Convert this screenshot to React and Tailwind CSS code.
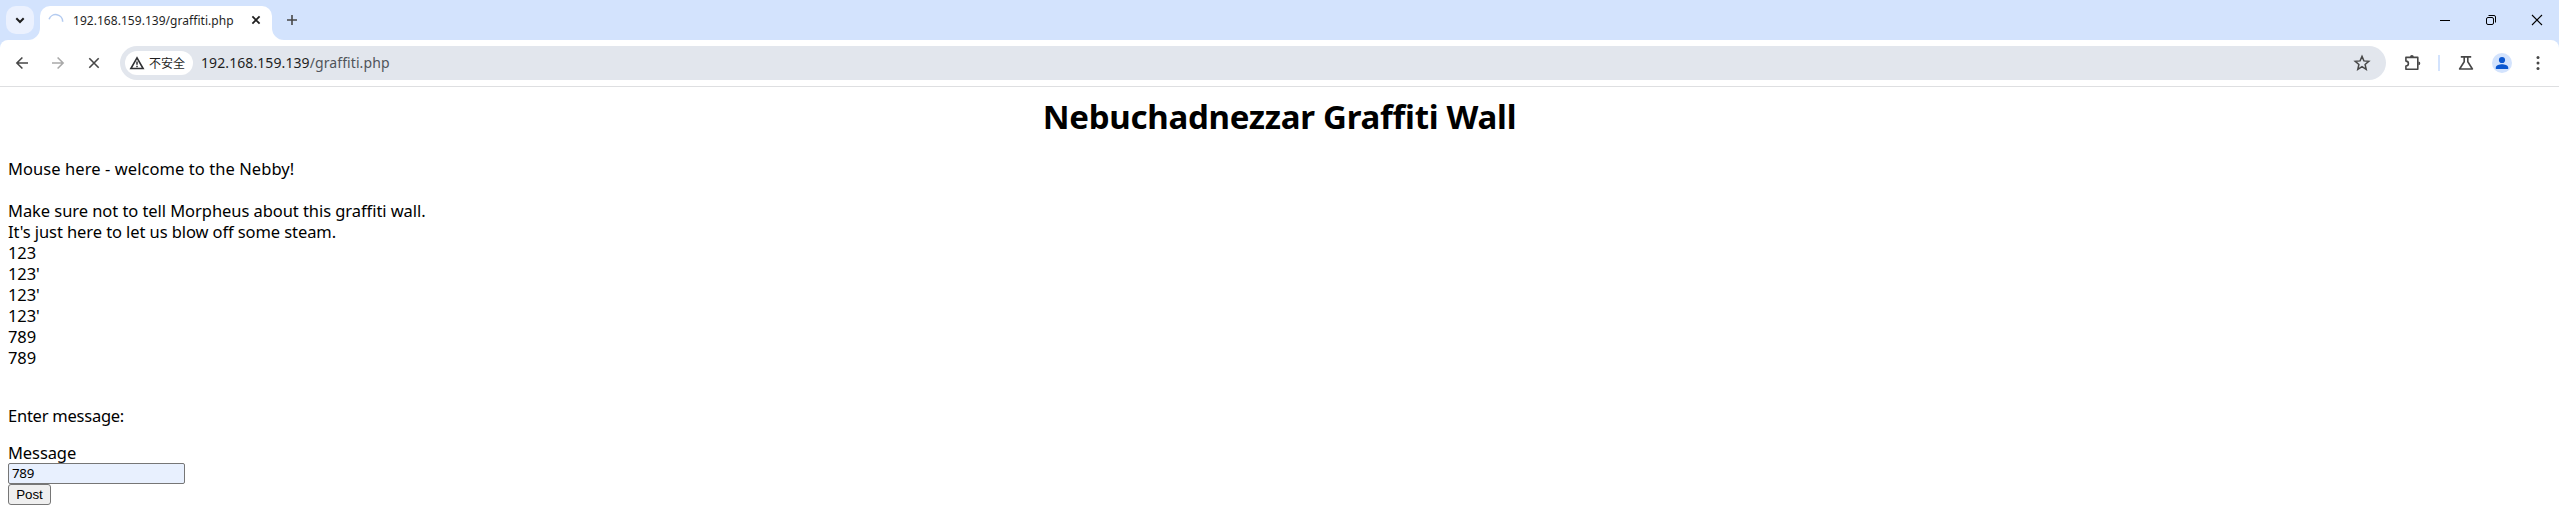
const messages = ['123', "123'", "123'", "123'", '789', '789'];

function Icon({ className = '', size = 20, sw = 1.6, children }) {
  return (
    <svg
      className={`block shrink-0 ${className}`}
      width={size}
      height={size}
      viewBox={`0 0 ${size} ${size}`}
      fill="none"
      stroke="currentColor"
      strokeWidth={sw}
    >
      {children}
    </svg>
  );
}

function TabStrip() {
  return (
    <div className="flex h-10 items-start bg-[#d3e3fd] pl-1.5">
      <button className="mt-1.5 flex h-7 w-7 shrink-0 items-center justify-center rounded-[10px] bg-[#ebf1fe] text-[#1f1f1f]">
        <Icon sw={2}><path d="M6.3 8.3 10 12l3.7-3.7" /></Icon>
      </button>
      <div className="relative ml-1.5 mt-1.5 flex h-[34px] w-[232px] shrink-0 items-start rounded-t-[10px] bg-white pl-1.5 pt-1">
        <svg className="absolute -left-3 bottom-0" width="12" height="12" viewBox="0 0 12 12" fill="#fff"><path d="M12 0v12H0A12 12 0 0 0 12 0Z" /></svg>
        <svg className="absolute -right-3 bottom-0" width="12" height="12" viewBox="0 0 12 12" fill="#fff"><path d="M0 0v12h12A12 12 0 0 1 0 0Z" /></svg>
        <Icon className="text-[#b4cbf0]"><path d="M3.1 9.3A7 7 0 0 1 16.7 11.8" /></Icon>
        <span className="ml-[7px] w-[172px] whitespace-nowrap font-['Noto_Sans',sans-serif] text-[12px] leading-[21px] tracking-[0.04px] text-[#1f1f1f]">192.168.159.139/graffiti.php</span>
        <Icon className="ml-[1px] text-[#1f1f1f]" sw={1.8}><path d="m6.4 6.4 7.2 7.2m0-7.2-7.2 7.2" /></Icon>
      </div>
      <Icon className="ml-2.5 mt-2.5 text-[#474747]" sw={1.6}><path d="M10 5v10M5 10h10" /></Icon>
      <div className="ml-auto flex shrink-0 items-center gap-[26px] pr-3 pt-2.5 text-black">
        <Icon sw={1}><path d="M5 10.5h10" /></Icon>
        <Icon sw={1}>
          <rect x="5.5" y="7.5" width="7" height="7" rx="1.5" />
          <path d="M7.5 5.5H13A1.5 1.5 0 0 1 14.5 7v5.5" />
        </Icon>
        <Icon sw={1.1}><path d="m5 5 10 10m0-10L5 15" /></Icon>
      </div>
    </div>
  );
}

function Toolbar() {
  return (
    <div className="bg-[#d3e3fd]">
      <div className="flex h-[47px] items-center rounded-t-lg border-b border-[#dedfe1] bg-white pl-3 pr-[11px] text-[#474747]">
        <Icon><path d="M16 10H5m5.4-5.5L4.9 10l5.5 5.5" /></Icon>
        <Icon className="ml-4 text-[#a9a9a9]"><path d="M4 10h11m-5.4-5.5 5.5 5.5-5.5 5.5" /></Icon>
        <Icon className="ml-4"><path d="m5.3 5.3 9.4 9.4m0-9.4-9.4 9.4" /></Icon>
        <div className="ml-4 flex h-[34px] flex-1 items-center rounded-full bg-[#e2e6ed] pl-[5px] pr-[14px]">
          <div className="flex h-6 w-[68px] items-center rounded-full bg-white pl-1 text-[#303134]">
            <Icon size={16}>
              <path d="M8 2.9 1.9 13.5h12.2Z" />
              <path d="M8 6.5v3.3M8 10.7v1.5" strokeWidth="1.5" />
            </Icon>
            <span className="ml-1 whitespace-nowrap font-['Noto_Sans_CJK_SC',sans-serif] text-[12px] leading-6 text-[#1f1f1f]">不安全</span>
          </div>
          <span className="ml-2 font-['Noto_Sans',sans-serif] text-[14px] leading-6 tracking-[0.09px] text-[#1f1f1f]">
            192.168.159.139<span className="text-[#50545a]">/graffiti.php</span>
          </span>
          <Icon className="ml-auto" sw={1.5}><path d="m10 3.4 1.9 4.5 4.9.4-3.7 3.2 1.1 4.8-4.2-2.6-4.2 2.6 1.1-4.8-3.7-3.2 4.9-.4Z" /></Icon>
        </div>
        <Icon className="ml-4" sw={1.6}>
          <path d="M3.9 4.4h11.9v11.9H3.9v-3.2a2.4 2.4 0 0 0 0-5Z" strokeLinejoin="round" />
          <path d="M8 4a1.9 1.9 0 0 1 3.8 0ZM16.4 8.4a1.9 1.9 0 0 1 0 3.8Z" fill="currentColor" stroke="none" />
        </Icon>
        <div className="ml-4 h-4 w-0.5 bg-[#d3e3fd]" />
        <Icon className="ml-4" sw={1.6}>
          <path d="M4.8 3.9h10.4M8.2 4v4.8l-4.6 7.2h12.8l-4.6-7.2V4" strokeLinejoin="round" />
        </Icon>
        <svg className="ml-4 block shrink-0" width="20" height="20" viewBox="0 0 20 20">
          <circle cx="10" cy="10" r="10" fill="#d3e3fd" />
          <circle cx="10" cy="7" r="3.1" fill="#0b57d0" />
          <path d="M3.8 16v-1.6c0-2.2 3.8-3.2 6.2-3.2s6.2 1 6.2 3.2V16Z" fill="#0b57d0" />
        </svg>
        <Icon className="ml-4">
          <g fill="currentColor" stroke="none">
            <circle cx="10" cy="4.6" r="1.5" />
            <circle cx="10" cy="10" r="1.5" />
            <circle cx="10" cy="15.4" r="1.5" />
          </g>
        </Icon>
      </div>
    </div>
  );
}

export default function App() {
  return (
    <div className="h-[529px] overflow-hidden bg-white font-['Noto_Sans',sans-serif] text-black">
      <TabStrip />
      <Toolbar />
      <main className="px-2 text-[16.5px] leading-[21px]">
        <h1 className="pt-2 text-center text-[33px] font-bold leading-[44px] tracking-[-0.27px]">Nebuchadnezzar Graffiti Wall</h1>
        <div className="mt-[19px]">
          <p className="tracking-[0.07px]">Mouse here - welcome to the Nebby!</p>
          <p className="mt-[21px] tracking-[-0.06px]">Make sure not to tell Morpheus about this graffiti wall.</p>
          <p className="tracking-[-0.09px]">It's just here to let us blow off some steam.</p>
          {messages.map((m, i) => (
            <p key={i} className="tracking-[-0.1px]">{m}</p>
          ))}
        </div>
        <p className="mt-[37px] tracking-[-0.24px]">Enter message:</p>
        <form className="mt-4 flex flex-col items-start" onSubmit={(e) => e.preventDefault()}>
          <label htmlFor="message" className="tracking-[-0.1px]">Message</label>
          <input
            id="message"
            defaultValue="789"
            className="h-[21px] w-[177px] rounded-[2px] border border-[#767676] bg-[#e8f0fe] px-[3px] pb-px font-['Noto_Sans',sans-serif] text-[13.33px] leading-[18px] tracking-[-0.25px]"
          />
          <button className="h-[21px] w-[43px] rounded-[3px] border border-[#767676] bg-[#efefef] font-['Liberation_Sans',sans-serif] text-[13.33px] leading-[15px]">Post</button>
        </form>
      </main>
    </div>
  );
}
